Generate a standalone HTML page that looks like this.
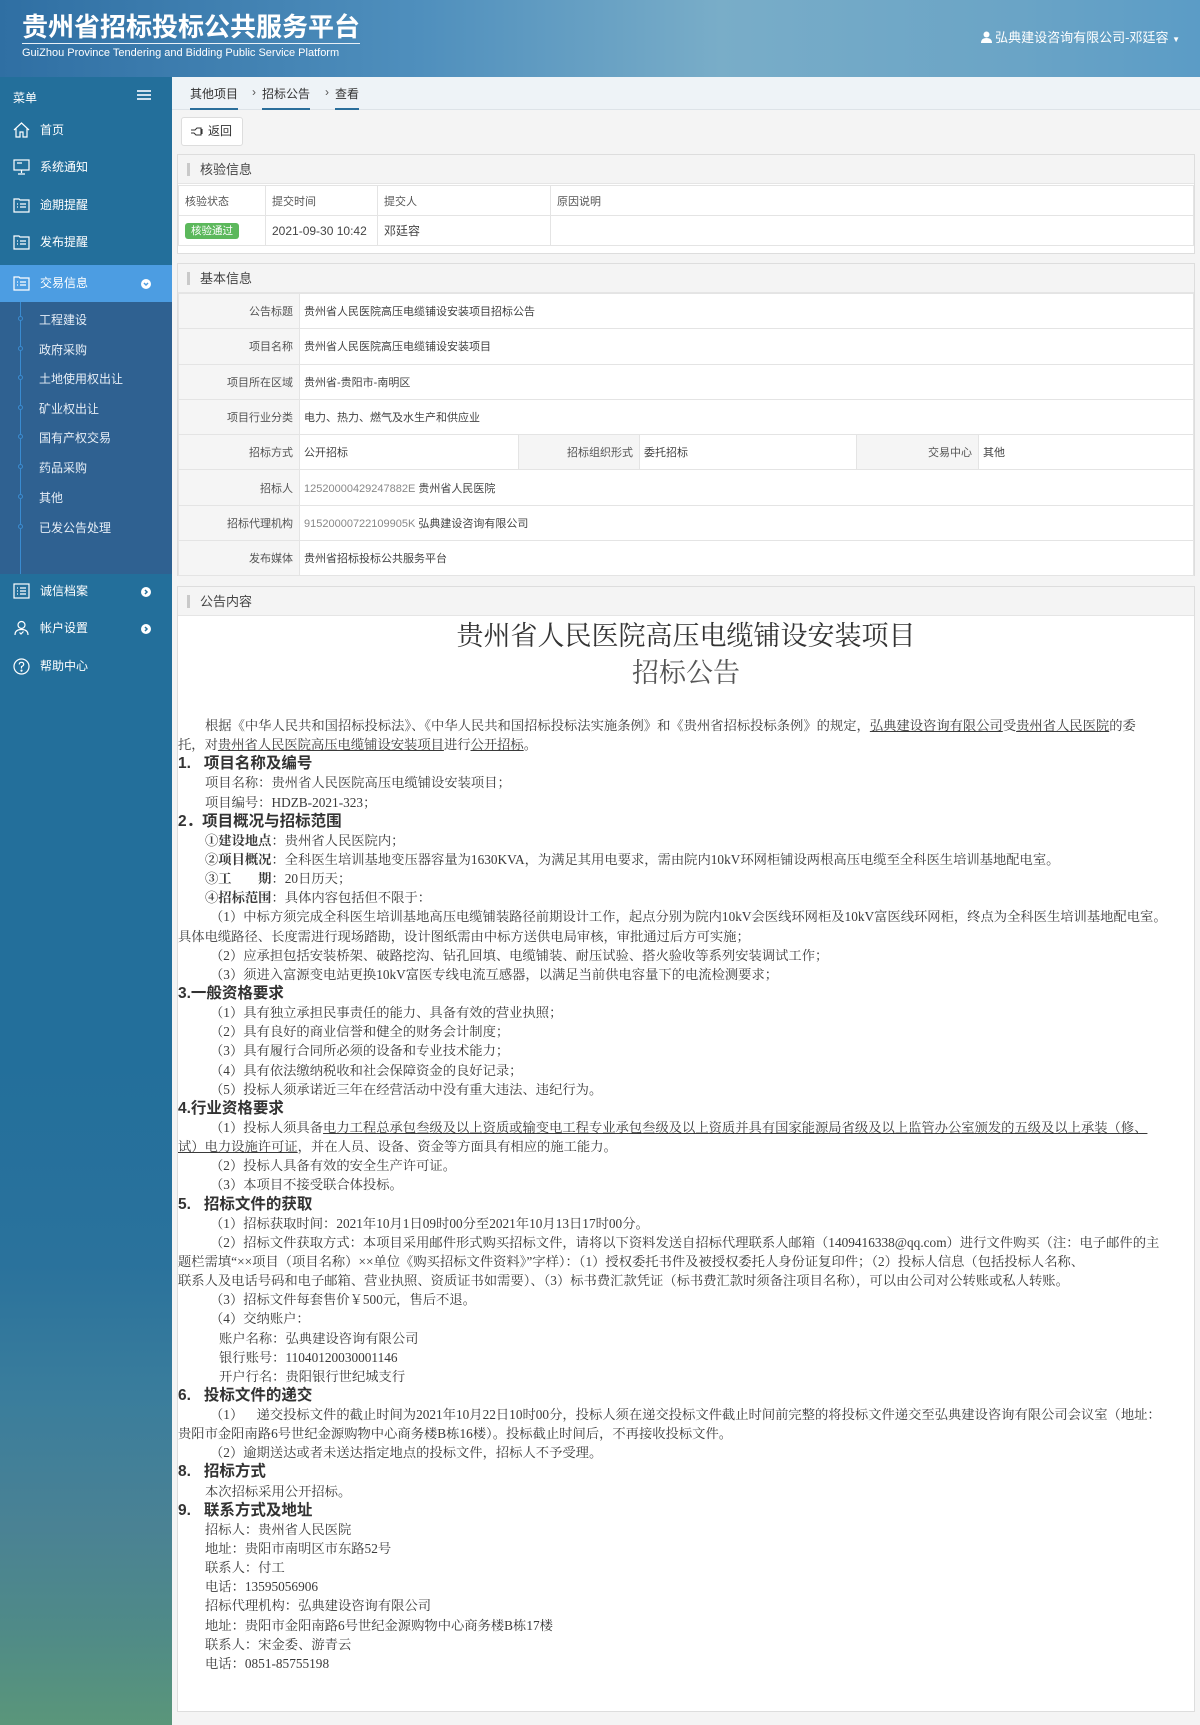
<!DOCTYPE html>
<html><head><meta charset="utf-8">
<style>
*{margin:0;padding:0;box-sizing:border-box}
body{width:1200px;height:1725px;position:relative;overflow:hidden;background:#f4f4f4;font-family:"Liberation Sans","Noto Sans CJK SC",sans-serif;color:#333;font-size:12px}
.hdr{position:absolute;left:0;top:0;width:1200px;height:77px;background:linear-gradient(90deg,#2f6fa3 0%,#4f8fbd 35%,#79adc8 60%,#6aa4c6 85%,#5b9cc6 100%);box-shadow:0 2px 3px rgba(0,0,0,.35)}
.hdr .t{position:absolute;left:22px;top:12px;font-size:26px;font-weight:bold;color:#fff;border-bottom:1px solid #e8f0f6;padding-bottom:1px;line-height:30px}
.hdr .s{position:absolute;left:22px;top:47px;font-size:11px;color:#fff}
.hdr .u{position:absolute;right:20px;top:27px;font-size:13px;color:#fff}
.side{position:absolute;left:0;top:77px;width:172px;height:1648px;background:linear-gradient(180deg,#236f9b 0%,#236f9b 60%,#2a729c 72%,#3a7d9c 80%,#4a8294 88%,#4f8a88 94%,#5a967a 100%)}
.mi{position:absolute;left:0;width:172px;height:37px;color:#fff;font-size:12px;line-height:37px;padding-left:40px}
.mi svg{position:absolute;left:13px;top:10px}
.act{background:#4c9de2}
.sub{position:absolute;left:0;top:225px;width:172px;height:272px;background:#2f6191}
.sub .ln{position:absolute;left:20px;top:0;width:1px;height:272px;background:#3a8bd0}
.si{position:absolute;left:39px;color:#e6eef6;font-size:12px}
.dot{position:absolute;left:18px;width:5px;height:5px;border:1px solid #3a8bd0;border-radius:50%;background:#2f6191}
.chev{position:absolute;left:141px;width:10px;height:10px;border-radius:50%;background:#fff}
.bc{position:absolute;left:172px;top:77px;width:1028px;height:33px;background:#eef3f7;border-bottom:1px solid #dde3e8}
.bc span{position:absolute;top:8px;font-size:12px;color:#333;border-bottom:2px solid #2a6e9b;padding-bottom:6px}
.bc i{position:absolute;top:8px;font-style:normal;color:#555;font-size:12px}
.btn{position:absolute;left:181px;top:117px;width:62px;height:29px;background:#fff;border:1px solid #ddd;border-radius:3px;font-size:12px;line-height:27px;padding-left:26px}
.pn{position:absolute;left:177px;width:1018px;background:#fff;border:1px solid #ddd}
.ph{height:29px;background:#f4f4f4;border-bottom:1px solid #e5e5e5;font-size:13px;line-height:29px;padding-left:22px;position:relative;color:#444}
.ph:before{content:"";position:absolute;left:9px;top:8px;width:3px;height:13px;background:#c9c9c9}
table{border-collapse:collapse;width:100%}
td{border:1px solid #e4e4e4;font-size:11px;color:#555}
.lb{background:#f5f5f5;text-align:right;padding-right:6px}
.vl{padding-left:4px;color:#444}
.ct{position:absolute;left:178px;top:716px;font-family:"Liberation Serif","Noto Serif CJK SC",serif;font-size:13.3px;color:#3a3a3a}
.ct div{height:19.15px;line-height:19.15px;white-space:nowrap}
.ct .h{font-family:"Liberation Sans","Noto Sans CJK SC",sans-serif;font-weight:bold;font-size:15.5px;color:#333}
.i2{padding-left:27px}.i3{padding-left:32px}.i4{padding-left:41px}
u{text-decoration:underline}
</style></head><body>
<div class="hdr">
<div class="t">贵州省招标投标公共服务平台</div>
<div class="s">GuiZhou Province Tendering and Bidding Public Service Platform</div>
<div class="u"><svg width="11" height="12" viewBox="0 0 11 12" style="vertical-align:-1px"><circle cx="5.5" cy="3.5" r="3" fill="#fff"/><path d="M0 12 Q0 7 5.5 7 Q11 7 11 12Z" fill="#fff"/></svg> 弘典建设咨询有限公司-邓廷容 <span style="font-size:8px">▼</span></div>
</div>

<div class="side">
<div style="position:absolute;left:13px;top:12px;color:#fff;font-size:12px">菜单</div>
<div style="position:absolute;left:137px;top:13px;width:14px;height:2px;background:#cfe0ee;box-shadow:0 4px 0 #cfe0ee,0 8px 0 #cfe0ee"></div>
<div class="mi" style="top:35px"><svg width="17" height="16" viewBox="0 0 17 16" fill="none" stroke="#fff" stroke-width="1.2"><path d="M1 8 L8.5 1 L16 8 M3 6.5 V15 H7 V10 H10 V15 H14 V6.5"/></svg>首页</div>
<div class="mi" style="top:72px"><svg width="17" height="16" viewBox="0 0 17 16" fill="none" stroke="#fff" stroke-width="1.2"><rect x="1" y="1" width="15" height="10"/><path d="M4 4h5M8.5 11v3M5 15h7"/></svg>系统通知</div>
<div class="mi" style="top:110px"><svg width="17" height="16" viewBox="0 0 17 16" fill="none" stroke="#fff" stroke-width="1.2"><path d="M1 2h5l1 1h9v12H1z"/><path d="M4 7h1M7 7h6M4 10h1M7 10h6"/></svg>逾期提醒</div>
<div class="mi" style="top:147px"><svg width="17" height="16" viewBox="0 0 17 16" fill="none" stroke="#fff" stroke-width="1.2"><path d="M1 2h5l1 1h9v12H1z"/><path d="M4 7h1M7 7h6M4 10h1M7 10h6"/></svg>发布提醒</div>
<div class="mi act" style="top:188px"><svg width="17" height="16" viewBox="0 0 17 16" fill="none" stroke="#fff" stroke-width="1.2"><path d="M1 2h5l1 1h9v12H1z"/><path d="M4 7h1M7 7h6M4 10h1M7 10h6"/></svg>交易信息<div class="chev" style="top:14px"><svg width="10" height="10" viewBox="0 0 10 10" style="position:absolute;left:0;top:0"><path d="M3 4 L5 6 L7 4" fill="none" stroke="#4c9de2" stroke-width="1.5"/></svg></div></div>
<div class="sub"><div class="ln"></div>
<div class="dot" style="top:14px"></div><div class="si" style="top:9px">工程建设</div>
<div class="dot" style="top:44px"></div><div class="si" style="top:39px">政府采购</div>
<div class="dot" style="top:73px"></div><div class="si" style="top:68px">土地使用权出让</div>
<div class="dot" style="top:103px"></div><div class="si" style="top:98px">矿业权出让</div>
<div class="dot" style="top:132px"></div><div class="si" style="top:127px">国有产权交易</div>
<div class="dot" style="top:162px"></div><div class="si" style="top:157px">药品采购</div>
<div class="dot" style="top:192px"></div><div class="si" style="top:187px">其他</div>
<div class="dot" style="top:222px"></div><div class="si" style="top:217px">已发公告处理</div>
</div>
<div class="mi" style="top:496px"><svg width="17" height="16" viewBox="0 0 17 16" fill="none" stroke="#fff" stroke-width="1.2"><rect x="1" y="1" width="15" height="14"/><path d="M4 5h1M7 5h6M4 8h1M7 8h6M4 11h1M7 11h6"/></svg>诚信档案<div class="chev" style="top:14px"><svg width="10" height="10" viewBox="0 0 10 10" style="position:absolute;left:0;top:0"><path d="M4 3 L6 5 L4 7" fill="none" stroke="#236f9b" stroke-width="1.5"/></svg></div></div>
<div class="mi" style="top:533px"><svg width="17" height="16" viewBox="0 0 17 16" fill="none" stroke="#fff" stroke-width="1.2"><circle cx="8.5" cy="5" r="3.5"/><path d="M2 15 Q2 9.5 8.5 9.5 Q15 9.5 15 15"/><path d="M6.5 12.5 l1.5 1.5 l2.5-2.5"/></svg>帐户设置<div class="chev" style="top:14px"><svg width="10" height="10" viewBox="0 0 10 10" style="position:absolute;left:0;top:0"><path d="M4 3 L6 5 L4 7" fill="none" stroke="#236f9b" stroke-width="1.5"/></svg></div></div>
<div class="mi" style="top:571px"><svg width="17" height="17" viewBox="0 0 17 17" fill="none" stroke="#fff" stroke-width="1.2"><circle cx="8.5" cy="8.5" r="7.5"/><path d="M6.3 6.5 Q6.3 4.3 8.5 4.3 Q10.7 4.3 10.7 6.3 Q10.7 7.8 8.5 8.6 V10.5"/><circle cx="8.5" cy="12.6" r=".5"/></svg>帮助中心</div>
</div>

<div class="bc"><span style="left:18px">其他项目</span><i style="left:80px">›</i><span style="left:90px">招标公告</span><i style="left:153px">›</i><span style="left:163px">查看</span></div>
<div class="btn"><svg width="14" height="10" viewBox="0 0 14 10" style="position:absolute;left:8px;top:9px" fill="none" stroke="#333" stroke-width="1.1"><path d="M1 3h4l2-2h4v7H6L4 6H1M12 2v5"/></svg>返回</div>

<div class="pn" style="top:154px;height:100px">
<div class="ph">核验信息</div>
<table style="margin-top:1px"><tr style="height:30px"><td style="width:87px;padding-left:6px">核验状态</td><td style="width:112px;padding-left:6px">提交时间</td><td style="width:173px;padding-left:6px">提交人</td><td style="padding-left:6px">原因说明</td></tr>
<tr style="height:30px"><td style="padding-left:6px"><span style="background:#5cb85c;color:#fff;border-radius:3px;padding:2px 6px;font-size:10.5px">核验通过</span></td><td style="padding-left:6px;color:#444;font-size:12px">2021-09-30 10:42</td><td style="padding-left:6px;color:#444;font-size:12px">邓廷容</td><td></td></tr></table>
</div>

<div class="pn" style="top:263px;height:313px">
<div class="ph">基本信息</div>
<table><colgroup><col style="width:121px"><col style="width:219px"><col style="width:121px"><col style="width:217px"><col style="width:122px"><col></colgroup>
<tr style="height:35.3px"><td class="lb">公告标题</td><td class="vl" colspan="5">贵州省人民医院高压电缆铺设安装项目招标公告</td></tr>
<tr style="height:35.3px"><td class="lb">项目名称</td><td class="vl" colspan="5">贵州省人民医院高压电缆铺设安装项目</td></tr>
<tr style="height:35.3px"><td class="lb">项目所在区域</td><td class="vl" colspan="5">贵州省-贵阳市-南明区</td></tr>
<tr style="height:35.3px"><td class="lb">项目行业分类</td><td class="vl" colspan="5">电力、热力、燃气及水生产和供应业</td></tr>
<tr style="height:35.3px"><td class="lb">招标方式</td><td class="vl">公开招标</td><td class="lb">招标组织形式</td><td class="vl">委托招标</td><td class="lb">交易中心</td><td class="vl">其他</td></tr>
<tr style="height:35.3px"><td class="lb">招标人</td><td class="vl" colspan="5"><span style="color:#888">12520000429247882E</span> 贵州省人民医院</td></tr>
<tr style="height:35.3px"><td class="lb">招标代理机构</td><td class="vl" colspan="5"><span style="color:#888">91520000722109905K</span> 弘典建设咨询有限公司</td></tr>
<tr style="height:35.3px"><td class="lb">发布媒体</td><td class="vl" colspan="5">贵州省招标投标公共服务平台</td></tr>
</table>
</div>

<div class="pn" style="top:586px;height:1126px">
<div class="ph">公告内容</div>
<div style="position:absolute;left:0;width:1016px;top:32px;text-align:center;font-family:'Liberation Serif','Noto Serif CJK SC',serif;font-size:27px;line-height:34px;color:#333">贵州省人民医院高压电缆铺设安装项目</div>
<div style="position:absolute;left:0;width:1016px;top:69px;text-align:center;font-family:'Liberation Serif','Noto Serif CJK SC',serif;font-size:27px;line-height:34px;color:#555">招标公告</div>
</div>

<div class="ct">
<div class="i2">根据《中华人民共和国招标投标法》、《中华人民共和国招标投标法实施条例》和《贵州省招标投标条例》的规定，<u>弘典建设咨询有限公司</u>受<u>贵州省人民医院</u>的委</div>
<div>托，对<u>贵州省人民医院高压电缆铺设安装项目</u>进行<u>公开招标</u>。</div>
<div class="h">1.&nbsp;&nbsp;&nbsp;项目名称及编号</div>
<div class="i2">项目名称：贵州省人民医院高压电缆铺设安装项目；</div>
<div class="i2">项目编号：HDZB-2021-323；</div>
<div class="h">2．项目概况与招标范围</div>
<div class="i2"><b>①建设地点</b>：贵州省人民医院内；</div>
<div class="i2"><b>②项目概况</b>：全科医生培训基地变压器容量为1630KVA，为满足其用电要求，需由院内10kV环网柜铺设两根高压电缆至全科医生培训基地配电室。</div>
<div class="i2"><b>③工&nbsp;&nbsp;&nbsp;&nbsp;&nbsp;&nbsp;&nbsp;&nbsp;期</b>：20日历天；</div>
<div class="i2"><b>④招标范围</b>：具体内容包括但不限于：</div>
<div class="i3">（1）中标方须完成全科医生培训基地高压电缆铺装路径前期设计工作，起点分别为院内10kV会医线环网柜及10kV富医线环网柜，终点为全科医生培训基地配电室。</div>
<div>具体电缆路径、长度需进行现场踏勘，设计图纸需由中标方送供电局审核，审批通过后方可实施；</div>
<div class="i3">（2）应承担包括安装桥架、破路挖沟、钻孔回填、电缆铺装、耐压试验、搭火验收等系列安装调试工作；</div>
<div class="i3">（3）须进入富源变电站更换10kV富医专线电流互感器，以满足当前供电容量下的电流检测要求；</div>
<div class="h">3.一般资格要求</div>
<div class="i3">（1）具有独立承担民事责任的能力、具备有效的营业执照；</div>
<div class="i3">（2）具有良好的商业信誉和健全的财务会计制度；</div>
<div class="i3">（3）具有履行合同所必须的设备和专业技术能力；</div>
<div class="i3">（4）具有依法缴纳税收和社会保障资金的良好记录；</div>
<div class="i3">（5）投标人须承诺近三年在经营活动中没有重大违法、违纪行为。</div>
<div class="h">4.行业资格要求</div>
<div class="i3">（1）投标人须具备<u>电力工程总承包叁级及以上资质或输变电工程专业承包叁级及以上资质并具有国家能源局省级及以上监管办公室颁发的五级及以上承装（修、</u></div>
<div><u>试）电力设施许可证</u>，并在人员、设备、资金等方面具有相应的施工能力。</div>
<div class="i3">（2）投标人具备有效的安全生产许可证。</div>
<div class="i3">（3）本项目不接受联合体投标。</div>
<div class="h">5.&nbsp;&nbsp;&nbsp;招标文件的获取</div>
<div class="i3">（1）招标获取时间：2021年10月1日09时00分至2021年10月13日17时00分。</div>
<div class="i3">（2）招标文件获取方式：本项目采用邮件形式购买招标文件，请将以下资料发送自招标代理联系人邮箱（1409416338@qq.com）进行文件购买（注：电子邮件的主</div>
<div>题栏需填“××项目（项目名称）××单位《购买招标文件资料》”字样）：（1）授权委托书件及被授权委托人身份证复印件；（2）投标人信息（包括投标人名称、</div>
<div>联系人及电话号码和电子邮箱、营业执照、资质证书如需要）、（3）标书费汇款凭证（标书费汇款时须备注项目名称），可以由公司对公转账或私人转账。</div>
<div class="i3">（3）招标文件每套售价￥500元，售后不退。</div>
<div class="i3">（4）交纳账户：</div>
<div class="i4">账户名称：弘典建设咨询有限公司</div>
<div class="i4">银行账号：11040120030001146</div>
<div class="i4">开户行名：贵阳银行世纪城支行</div>
<div class="h">6.&nbsp;&nbsp;&nbsp;投标文件的递交</div>
<div class="i3">（1）&nbsp;&nbsp;&nbsp;&nbsp;递交投标文件的截止时间为2021年10月22日10时00分，投标人须在递交投标文件截止时间前完整的将投标文件递交至弘典建设咨询有限公司会议室（地址：</div>
<div>贵阳市金阳南路6号世纪金源购物中心商务楼B栋16楼）。投标截止时间后，不再接收投标文件。</div>
<div class="i3">（2）逾期送达或者未送达指定地点的投标文件，招标人不予受理。</div>
<div class="h">8.&nbsp;&nbsp;&nbsp;招标方式</div>
<div class="i2">本次招标采用公开招标。</div>
<div class="h">9.&nbsp;&nbsp;&nbsp;联系方式及地址</div>
<div class="i2">招标人：贵州省人民医院</div>
<div class="i2">地址：贵阳市南明区市东路52号</div>
<div class="i2">联系人：付工</div>
<div class="i2">电话：13595056906</div>
<div class="i2">招标代理机构：弘典建设咨询有限公司</div>
<div class="i2">地址：贵阳市金阳南路6号世纪金源购物中心商务楼B栋17楼</div>
<div class="i2">联系人：宋金委、游青云</div>
<div class="i2">电话：0851-85755198</div>
</div>
</body></html>
